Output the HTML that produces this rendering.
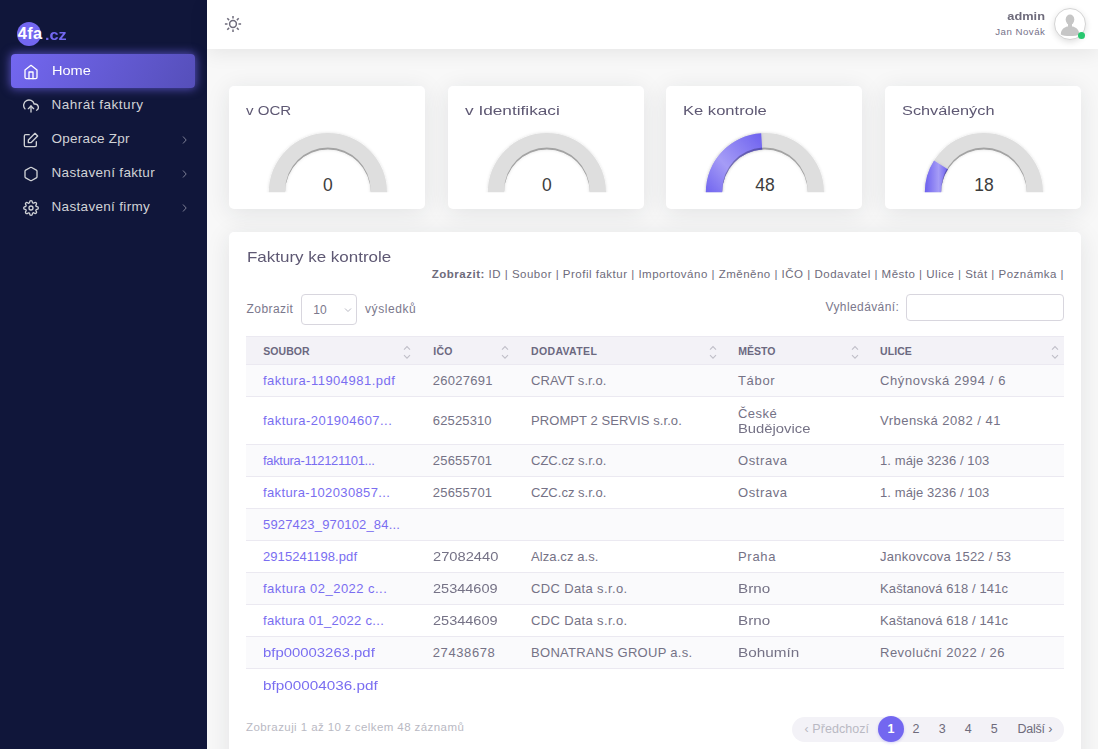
<!DOCTYPE html>
<html><head><meta charset="utf-8"><style>
*{box-sizing:border-box;margin:0;padding:0}
html,body{width:1098px;height:749px;overflow:hidden}
body{font-family:"Liberation Sans",sans-serif;background:#f8f8f8;position:relative}
.abs{position:absolute}
.t{position:absolute;white-space:nowrap}
.card{background:#fff;border-radius:5px;box-shadow:0 4px 24px 0 rgba(34,41,47,.1)}
</style></head><body>
<div class="abs" style="left:0;top:0;width:207px;height:749px;background:#10163a"></div>
<div class="abs" style="left:16.9px;top:21.8px;width:24.5px;height:24.5px;border-radius:50%;background:#7367f0"></div>
<div class="t" id="logo4fa" style="left:17.7px;top:23.48px;font-size:16.5px;line-height:21px;color:#fff;font-weight:bold;letter-spacing:0.371px;">4fa</div>
<div class="t" id="logocz" style="left:44.5px;top:25.67px;font-size:14.5px;line-height:18px;color:#7367f0;font-weight:bold;letter-spacing:0.000px;transform:scaleX(1.1166);transform-origin:left center;">.cz</div>
<div class="abs" style="left:11px;top:54px;width:184px;height:34px;border-radius:4px;background:linear-gradient(118deg,#7367f0,rgba(115,103,240,.7));box-shadow:0 0 10px 1px rgba(115,103,240,.7)"></div>
<svg class="abs" style="left:23px;top:64px" width="16" height="16" viewBox="0 0 24 24" fill="none" stroke-width="2" stroke-linecap="round" stroke-linejoin="round" stroke="#fff"><path d="M3 9l9-7 9 7v11a2 2 0 0 1-2 2H5a2 2 0 0 1-2-2z"/><polyline points="9 22 9 12 15 12 15 22"/></svg>
<svg class="abs" style="left:23px;top:98px" width="16" height="16" viewBox="0 0 24 24" fill="none" stroke-width="2" stroke-linecap="round" stroke-linejoin="round" stroke="#d0d2d6"><polyline points="16 16 12 12 8 16"/><line x1="12" y1="12" x2="12" y2="21"/><path d="M20.39 18.39A5 5 0 0 0 18 9h-1.26A8 8 0 1 0 3 16.3"/></svg>
<svg class="abs" style="left:23px;top:132px" width="16" height="16" viewBox="0 0 24 24" fill="none" stroke-width="2" stroke-linecap="round" stroke-linejoin="round" stroke="#d0d2d6"><path d="M20 14.66V20a2 2 0 0 1-2 2H4a2 2 0 0 1-2-2V6a2 2 0 0 1 2-2h5.34"/><polygon points="18 2 22 6 12 16 8 16 8 12 18 2"/></svg>
<svg class="abs" style="left:23px;top:166px" width="16" height="16" viewBox="0 0 24 24" fill="none" stroke-width="2" stroke-linecap="round" stroke-linejoin="round" stroke="#d0d2d6"><path d="M21 16V8a2 2 0 0 0-1-1.73l-7-4a2 2 0 0 0-2 0l-7 4A2 2 0 0 0 3 8v8a2 2 0 0 0 1 1.73l7 4a2 2 0 0 0 2 0l7-4A2 2 0 0 0 21 16z"/></svg>
<svg class="abs" style="left:23px;top:200px" width="16" height="16" viewBox="0 0 24 24" fill="none" stroke-width="2" stroke-linecap="round" stroke-linejoin="round" stroke="#d0d2d6"><circle cx="12" cy="12" r="3"/><path d="M19.4 15a1.65 1.65 0 0 0 .33 1.82l.06.06a2 2 0 0 1 0 2.83 2 2 0 0 1-2.83 0l-.06-.06a1.65 1.65 0 0 0-1.82-.33 1.65 1.65 0 0 0-1 1.51V21a2 2 0 0 1-2 2 2 2 0 0 1-2-2v-.09A1.65 1.65 0 0 0 9 19.4a1.65 1.65 0 0 0-1.82.33l-.06.06a2 2 0 0 1-2.83 0 2 2 0 0 1 0-2.830l.06-.06a1.65 1.65 0 0 0 .33-1.82 1.65 1.65 0 0 0-1.51-1H3a2 2 0 0 1-2-2 2 2 0 0 1 2-2h.09A1.65 1.65 0 0 0 4.6 9a1.65 1.65 0 0 0-.33-1.82l-.06-.06a2 2 0 0 1 0-2.83 2 2 0 0 1 2.83 0l.06.06a1.65 1.65 0 0 0 1.82.33H9a1.65 1.65 0 0 0 1-1.51V3a2 2 0 0 1 2-2 2 2 0 0 1 2 2v.09a1.65 1.65 0 0 0 1 1.51 1.65 1.65 0 0 0 1.82-.33l.06-.06a2 2 0 0 1 2.83 0 2 2 0 0 1 0 2.83l-.06.06a1.65 1.65 0 0 0-.33 1.82V9a1.65 1.65 0 0 0 1.51 1H21a2 2 0 0 1 2 2 2 2 0 0 1-2 2h-.09a1.65 1.65 0 0 0-1.51 1z"/></svg>
<div class="t" id="nHome" style="left:51.7px;top:61.92px;font-size:13.5px;line-height:17px;color:#fff;font-weight:normal;letter-spacing:0.000px;transform:scaleX(1.0773);transform-origin:left center;">Home</div>
<div class="t" id="nNahrat" style="left:51.5px;top:96.42px;font-size:13.5px;line-height:17px;color:#d0d2d6;font-weight:normal;letter-spacing:0.508px;">Nahrát faktury</div>
<div class="t" id="nOper" style="left:51.5px;top:130.32px;font-size:13.5px;line-height:17px;color:#d0d2d6;font-weight:normal;letter-spacing:0.221px;">Operace Zpr</div>
<div class="t" id="nNastF" style="left:51.5px;top:164.12px;font-size:13.5px;line-height:17px;color:#d0d2d6;font-weight:normal;letter-spacing:0.327px;">Nastavení faktur</div>
<div class="t" id="nNastFi" style="left:51.5px;top:197.92px;font-size:13.5px;line-height:17px;color:#d0d2d6;font-weight:normal;letter-spacing:0.323px;">Nastavení firmy</div>
<svg class="abs" style="left:181px;top:135px" width="8" height="10" viewBox="0 0 8 10"><path d="M2 1.5l3.2 3.5-3.2 3.5" fill="none" stroke="#7d7f95" stroke-width="1"/></svg>
<svg class="abs" style="left:181px;top:169px" width="8" height="10" viewBox="0 0 8 10"><path d="M2 1.5l3.2 3.5-3.2 3.5" fill="none" stroke="#7d7f95" stroke-width="1"/></svg>
<svg class="abs" style="left:181px;top:203px" width="8" height="10" viewBox="0 0 8 10"><path d="M2 1.5l3.2 3.5-3.2 3.5" fill="none" stroke="#7d7f95" stroke-width="1"/></svg>
<div class="abs" style="left:207px;top:0;width:891px;height:49px;background:#fff;box-shadow:0 4px 20px 0 rgba(0,0,0,.08)"></div>
<svg class="abs" style="left:222.7px;top:14.1px" width="20" height="20" viewBox="0 0 20 20" fill="none" stroke="#6e6b7b" stroke-width="1.5"><circle cx="10" cy="10" r="3.4"/><line x1="15.50" y1="10.00" x2="18.10" y2="10.00"/><line x1="13.89" y1="13.89" x2="15.73" y2="15.73"/><line x1="10.00" y1="15.50" x2="10.00" y2="18.10"/><line x1="6.11" y1="13.89" x2="4.27" y2="15.73"/><line x1="4.50" y1="10.00" x2="1.90" y2="10.00"/><line x1="6.11" y1="6.11" x2="4.27" y2="4.27"/><line x1="10.00" y1="4.50" x2="10.00" y2="1.90"/><line x1="13.89" y1="6.11" x2="15.73" y2="4.27"/></svg>
<div class="t" id="hAdmin" style="right:53.200000000000045px;top:8.52px;font-size:11.2px;line-height:14px;color:#6e6b7b;font-weight:bold;letter-spacing:0.000px;transform:scaleX(1.1410);transform-origin:right center;">admin</div>
<div class="t" id="hJan" style="right:53.09999999999991px;top:26.04px;font-size:9.7px;line-height:12px;color:#75728a;font-weight:normal;letter-spacing:0.490px;margin-right:-0.490px;">Jan Novák</div>
<div class="abs" style="left:1054px;top:8px;width:32px;height:32px;border-radius:50%;background:#fff;border:1.5px solid #d4d4d4;box-shadow:0 2px 6px rgba(0,0,0,.13);overflow:hidden"><svg style="position:absolute;left:-0.5px;top:-0.5px" width="30" height="30" viewBox="0 0 30 30"><ellipse cx="15" cy="10.6" rx="4.3" ry="5" fill="#c6c6c6"/><rect x="13" y="14" width="4" height="4" fill="#c6c6c6"/><path d="M5.8 25.5C5.8 20.5 9 18.2 12.5 17.4L17.5 17.4C21 18.2 24.2 20.5 24.2 25.5C21 27.5 9 27.5 5.8 25.5z" fill="#c6c6c6"/></svg></div>
<div class="abs" style="left:1077.9px;top:32px;width:7px;height:7px;border-radius:50%;background:#28c76f"></div>
<svg width="0" height="0" style="position:absolute"><defs>
<filter id="gsh" x="-10%" y="-10%" width="120%" height="120%"><feOffset in="SourceAlpha" dy="-1.6" result="off"/><feGaussianBlur in="off" stdDeviation="0.7" result="blur"/><feComposite in="SourceAlpha" in2="blur" operator="arithmetic" k2="1" k3="-1" result="edge"/><feFlood flood-color="#000" flood-opacity="0.5"/><feComposite in2="edge" operator="in" result="sh"/><feGaussianBlur in="SourceAlpha" stdDeviation="1.8" result="glow0"/><feFlood flood-color="#000" flood-opacity="0.13"/><feComposite in2="glow0" operator="in" result="glow"/><feMerge result="m"><feMergeNode in="glow"/><feMergeNode in="SourceGraphic"/><feMergeNode in="sh"/></feMerge><feGaussianBlur in="m" stdDeviation="0.45"/></filter>
<clipPath id="gclip"><rect x="0" y="0" width="196" height="106.2"/></clipPath>
<linearGradient id="gg3" x1="0" y1="1" x2="1" y2="0"><stop offset="0" stop-color="#6c60ef"/><stop offset="0.42" stop-color="#a59cf6"/><stop offset="1" stop-color="#6c60ef"/></linearGradient>
<linearGradient id="gg4" x1="0" y1="0" x2="1" y2="0"><stop offset="0" stop-color="#6c60ef"/><stop offset="0.6" stop-color="#a59cf6"/><stop offset="1" stop-color="#6c60ef"/></linearGradient>
</defs></svg>
<div class="abs card" style="left:229px;top:86px;width:196px;height:123px"></div>
<svg class="abs" style="left:229px;top:86px" width="196" height="123" viewBox="0 0 196 123"><g clip-path="url(#gclip)"><path d="M39.80,110.2 L56.20,110.2 L56.20,106.2 A42.7,42.7 0 0 1 141.60,106.2 L141.60,110.2 L158.00,110.2 L158.00,106.2 A59.1,59.1 0 0 0 39.80,106.2 Z" fill="#dedede" filter="url(#gsh)"/></g><text x="98.9" y="104.8" text-anchor="middle" font-family="Liberation Sans" font-size="17.5" fill="#3d3d3d">0</text></svg>
<div class="t" id="card0" style="left:246.3px;top:102.25px;font-size:13.7px;line-height:17px;color:#5e5873;font-weight:normal;letter-spacing:0.000px;transform:scaleX(1.1008);transform-origin:left center;">v OCR</div>
<div class="abs card" style="left:448px;top:86px;width:196px;height:123px"></div>
<svg class="abs" style="left:448px;top:86px" width="196" height="123" viewBox="0 0 196 123"><g clip-path="url(#gclip)"><path d="M39.80,110.2 L56.20,110.2 L56.20,106.2 A42.7,42.7 0 0 1 141.60,106.2 L141.60,110.2 L158.00,110.2 L158.00,106.2 A59.1,59.1 0 0 0 39.80,106.2 Z" fill="#dedede" filter="url(#gsh)"/></g><text x="98.9" y="104.8" text-anchor="middle" font-family="Liberation Sans" font-size="17.5" fill="#3d3d3d">0</text></svg>
<div class="t" id="card1" style="left:465.3px;top:102.25px;font-size:13.7px;line-height:17px;color:#5e5873;font-weight:normal;letter-spacing:0.000px;transform:scaleX(1.2585);transform-origin:left center;">v Identifikaci</div>
<div class="abs card" style="left:666px;top:86px;width:196px;height:123px"></div>
<svg class="abs" style="left:666px;top:86px" width="196" height="123" viewBox="0 0 196 123"><g clip-path="url(#gclip)"><path d="M39.80,110.2 L56.20,110.2 L56.20,106.2 A42.7,42.7 0 0 1 141.60,106.2 L141.60,110.2 L158.00,110.2 L158.00,106.2 A59.1,59.1 0 0 0 39.80,106.2 Z" fill="#dedede" filter="url(#gsh)"/><path d="M39.80,110.2 L56.20,110.2 L56.20,106.2 A42.7,42.7 0 0 1 96.22,63.58 L95.19,47.22 A59.1,59.1 0 0 0 39.80,106.2 Z" fill="url(#gg3)" filter="url(#gsh)"/></g><text x="98.9" y="104.8" text-anchor="middle" font-family="Liberation Sans" font-size="17.5" fill="#3d3d3d">48</text></svg>
<div class="t" id="card2" style="left:683.3px;top:102.25px;font-size:13.7px;line-height:17px;color:#5e5873;font-weight:normal;letter-spacing:0.000px;transform:scaleX(1.2101);transform-origin:left center;">Ke kontrole</div>
<div class="abs card" style="left:885px;top:86px;width:196px;height:123px"></div>
<svg class="abs" style="left:885px;top:86px" width="196" height="123" viewBox="0 0 196 123"><g clip-path="url(#gclip)"><path d="M39.80,110.2 L56.20,110.2 L56.20,106.2 A42.7,42.7 0 0 1 141.60,106.2 L141.60,110.2 L158.00,110.2 L158.00,106.2 A59.1,59.1 0 0 0 39.80,106.2 Z" fill="#dedede" filter="url(#gsh)"/><path d="M39.80,110.2 L56.20,110.2 L56.20,106.2 A42.7,42.7 0 0 1 62.85,83.32 L49.00,74.53 A59.1,59.1 0 0 0 39.80,106.2 Z" fill="url(#gg4)" filter="url(#gsh)"/></g><text x="98.9" y="104.8" text-anchor="middle" font-family="Liberation Sans" font-size="17.5" fill="#3d3d3d">18</text></svg>
<div class="t" id="card3" style="left:902.3px;top:102.25px;font-size:13.7px;line-height:17px;color:#5e5873;font-weight:normal;letter-spacing:0.000px;transform:scaleX(1.1919);transform-origin:left center;">Schválených</div>
<div class="abs card" style="left:229px;top:232px;width:852px;height:560px"></div>
<div class="t" id="tTitle" style="left:246.6px;top:247.10px;font-size:15px;line-height:19px;color:#5e5873;font-weight:normal;letter-spacing:0.000px;transform:scaleX(1.1304);transform-origin:left center;">Faktury ke kontrole</div>
<div class="t" id="tColv" style="left:431.8px;top:267.01px;font-size:11.5px;line-height:14px;color:#6e6b7b;font-weight:normal;letter-spacing:0.499px;"><b>Zobrazit:</b> ID | Soubor | Profil faktur | Importováno | Změněno | IČO | Dodavatel | Město | Ulice | Stát | Poznámka |</div>
<div class="t" id="tZobr" style="left:246.6px;top:301.84px;font-size:12px;line-height:15px;color:#7b788c;font-weight:normal;letter-spacing:0.406px;">Zobrazit</div>
<div class="abs" style="left:301.3px;top:294.2px;width:55.6px;height:30.4px;border:1px solid #d8d6de;border-radius:4px"></div>
<div class="t" id="tTen" style="left:313.3px;top:303.14px;font-size:12px;line-height:15px;color:#7b788c;font-weight:normal;letter-spacing:0.000px;">10</div>
<svg class="abs" style="left:343.8px;top:306.6px" width="8" height="6" viewBox="0 0 8 6"><path d="M1 1.5l3 3 3-3" fill="none" stroke="#b9b9c3" stroke-width="1"/></svg>
<div class="t" id="tVysl" style="left:365px;top:301.84px;font-size:12px;line-height:15px;color:#7b788c;font-weight:normal;letter-spacing:0.585px;">výsledků</div>
<div class="t" id="tVyhl" style="left:825.5px;top:299.84px;font-size:12px;line-height:15px;color:#7b788c;font-weight:normal;letter-spacing:0.397px;">Vyhledávání:</div>
<div class="abs" style="left:906px;top:294px;width:158px;height:27px;border:1px solid #d8d6de;border-radius:4px"></div>
<div class="abs" style="left:246px;top:336px;width:818px;height:29px;background:#f3f2f7;border-top:1px solid #ebe9f1;border-bottom:1px solid #ebe9f1"></div>
<div class="t" id="hS" style="left:263.2px;top:344.96px;font-size:10.5px;line-height:13px;color:#6b6880;font-weight:bold;letter-spacing:0.080px;">SOUBOR</div>
<div class="t" id="hI" style="left:433.2px;top:344.96px;font-size:10.5px;line-height:13px;color:#6b6880;font-weight:bold;letter-spacing:0.316px;">IČO</div>
<div class="t" id="hD" style="left:531px;top:344.96px;font-size:10.5px;line-height:13px;color:#6b6880;font-weight:bold;letter-spacing:0.350px;">DODAVATEL</div>
<div class="t" id="hM" style="left:738.3px;top:344.96px;font-size:10.5px;line-height:13px;color:#6b6880;font-weight:bold;letter-spacing:0.011px;">MĚSTO</div>
<div class="t" id="hU" style="left:880px;top:344.96px;font-size:10.5px;line-height:13px;color:#6b6880;font-weight:bold;letter-spacing:0.074px;">ULICE</div>
<svg class="abs" style="left:403px;top:342px" width="8" height="18" viewBox="0 0 8 18"><path d="M1 7.6l3-3 3 3M1 13.2l3 3 3-3" fill="none" stroke="#c0bfc8" stroke-width="1.1"/></svg>
<svg class="abs" style="left:501px;top:342px" width="8" height="18" viewBox="0 0 8 18"><path d="M1 7.6l3-3 3 3M1 13.2l3 3 3-3" fill="none" stroke="#c0bfc8" stroke-width="1.1"/></svg>
<svg class="abs" style="left:709px;top:342px" width="8" height="18" viewBox="0 0 8 18"><path d="M1 7.6l3-3 3 3M1 13.2l3 3 3-3" fill="none" stroke="#c0bfc8" stroke-width="1.1"/></svg>
<svg class="abs" style="left:851px;top:342px" width="8" height="18" viewBox="0 0 8 18"><path d="M1 7.6l3-3 3 3M1 13.2l3 3 3-3" fill="none" stroke="#c0bfc8" stroke-width="1.1"/></svg>
<svg class="abs" style="left:1051px;top:342px" width="8" height="18" viewBox="0 0 8 18"><path d="M1 7.6l3-3 3 3M1 13.2l3 3 3-3" fill="none" stroke="#c0bfc8" stroke-width="1.1"/></svg>
<div class="abs" style="left:246px;top:365.0px;width:818px;height:32.2px;background:#fafafc;border-bottom:1px solid #ebe9f1;"></div>
<div class="t" id="r0c0" style="left:263px;top:372.94px;font-size:13px;line-height:16px;color:#7a6ef1;font-weight:normal;letter-spacing:0.482px;">faktura-11904981.pdf</div>
<div class="t" id="r0c1" style="left:432.8px;top:372.94px;font-size:13px;line-height:16px;color:#757286;font-weight:normal;letter-spacing:0.279px;">26027691</div>
<div class="t" id="r0c2" style="left:531px;top:372.94px;font-size:13px;line-height:16px;color:#757286;font-weight:normal;letter-spacing:0.059px;">CRAVT s.r.o.</div>
<div class="t" id="r0c3" style="left:738px;top:372.94px;font-size:13px;line-height:16px;color:#757286;font-weight:normal;letter-spacing:0.659px;">Tábor</div>
<div class="t" id="r0c4" style="left:880px;top:372.94px;font-size:13px;line-height:16px;color:#757286;font-weight:normal;letter-spacing:0.623px;">Chýnovská 2994 / 6</div>
<div class="abs" style="left:246px;top:397.2px;width:818px;height:48.1px;background:#fff;border-bottom:1px solid #ebe9f1;"></div>
<div class="t" id="r1c0" style="left:263px;top:413.34px;font-size:13px;line-height:16px;color:#7a6ef1;font-weight:normal;letter-spacing:0.464px;">faktura-201904607...</div>
<div class="t" id="r1c1" style="left:432.8px;top:413.34px;font-size:13px;line-height:16px;color:#757286;font-weight:normal;letter-spacing:0.137px;">62525310</div>
<div class="t" id="r1c2" style="left:531px;top:413.34px;font-size:13px;line-height:16px;color:#757286;font-weight:normal;letter-spacing:0.082px;">PROMPT 2 SERVIS s.r.o.</div>
<div class="t" id="r1c3a" style="left:738px;top:405.69px;font-size:13px;line-height:16px;color:#757286;font-weight:normal;letter-spacing:0.486px;">České</div>
<div class="t" id="r1c3b" style="left:738px;top:420.99px;font-size:13px;line-height:16px;color:#757286;font-weight:normal;letter-spacing:0.000px;transform:scaleX(1.1382);transform-origin:left center;">Budějovice</div>
<div class="t" id="r1c4" style="left:880px;top:413.34px;font-size:13px;line-height:16px;color:#757286;font-weight:normal;letter-spacing:0.478px;">Vrbenská 2082 / 41</div>
<div class="abs" style="left:246px;top:445.3px;width:818px;height:31.9px;background:#fafafc;border-bottom:1px solid #ebe9f1;"></div>
<div class="t" id="r2c0" style="left:263px;top:453.34px;font-size:13px;line-height:16px;color:#7a6ef1;font-weight:normal;letter-spacing:-0.329px;">faktura-112121101...</div>
<div class="t" id="r2c1" style="left:432.8px;top:453.34px;font-size:13px;line-height:16px;color:#757286;font-weight:normal;letter-spacing:0.208px;">25655701</div>
<div class="t" id="r2c2" style="left:531px;top:453.34px;font-size:13px;line-height:16px;color:#757286;font-weight:normal;letter-spacing:0.014px;">CZC.cz s.r.o.</div>
<div class="t" id="r2c3" style="left:738px;top:453.34px;font-size:13px;line-height:16px;color:#757286;font-weight:normal;letter-spacing:0.597px;">Ostrava</div>
<div class="t" id="r2c4" style="left:880px;top:453.34px;font-size:13px;line-height:16px;color:#757286;font-weight:normal;letter-spacing:0.088px;">1. máje 3236 / 103</div>
<div class="abs" style="left:246px;top:477.2px;width:818px;height:31.8px;background:#fff;border-bottom:1px solid #ebe9f1;"></div>
<div class="t" id="r3c0" style="left:263px;top:485.19px;font-size:13px;line-height:16px;color:#7a6ef1;font-weight:normal;letter-spacing:0.359px;">faktura-102030857...</div>
<div class="t" id="r3c1" style="left:432.8px;top:485.19px;font-size:13px;line-height:16px;color:#757286;font-weight:normal;letter-spacing:0.208px;">25655701</div>
<div class="t" id="r3c2" style="left:531px;top:485.19px;font-size:13px;line-height:16px;color:#757286;font-weight:normal;letter-spacing:0.014px;">CZC.cz s.r.o.</div>
<div class="t" id="r3c3" style="left:738px;top:485.19px;font-size:13px;line-height:16px;color:#757286;font-weight:normal;letter-spacing:0.597px;">Ostrava</div>
<div class="t" id="r3c4" style="left:880px;top:485.19px;font-size:13px;line-height:16px;color:#757286;font-weight:normal;letter-spacing:0.088px;">1. máje 3236 / 103</div>
<div class="abs" style="left:246px;top:509.0px;width:818px;height:32.1px;background:#fafafc;border-bottom:1px solid #ebe9f1;"></div>
<div class="t" id="r4c0" style="left:263px;top:517.14px;font-size:13px;line-height:16px;color:#7a6ef1;font-weight:normal;letter-spacing:0.161px;">5927423_970102_84...</div>
<div class="abs" style="left:246px;top:541.1px;width:818px;height:31.9px;background:#fff;border-bottom:1px solid #ebe9f1;"></div>
<div class="t" id="r5c0" style="left:263px;top:549.14px;font-size:13px;line-height:16px;color:#7a6ef1;font-weight:normal;letter-spacing:0.075px;">2915241198.pdf</div>
<div class="t" id="r5c1" style="left:432.8px;top:549.14px;font-size:13px;line-height:16px;color:#757286;font-weight:normal;letter-spacing:0.000px;transform:scaleX(1.1306);transform-origin:left center;">27082440</div>
<div class="t" id="r5c2" style="left:531px;top:549.14px;font-size:13px;line-height:16px;color:#757286;font-weight:normal;letter-spacing:0.084px;">Alza.cz a.s.</div>
<div class="t" id="r5c3" style="left:738px;top:549.14px;font-size:13px;line-height:16px;color:#757286;font-weight:normal;letter-spacing:0.702px;">Praha</div>
<div class="t" id="r5c4" style="left:880px;top:549.14px;font-size:13px;line-height:16px;color:#757286;font-weight:normal;letter-spacing:0.243px;">Jankovcova 1522 / 53</div>
<div class="abs" style="left:246px;top:573.0px;width:818px;height:32.1px;background:#fafafc;border-bottom:1px solid #ebe9f1;"></div>
<div class="t" id="r6c0" style="left:263px;top:581.14px;font-size:13px;line-height:16px;color:#7a6ef1;font-weight:normal;letter-spacing:0.467px;">faktura 02_2022 c...</div>
<div class="t" id="r6c1" style="left:432.8px;top:581.14px;font-size:13px;line-height:16px;color:#757286;font-weight:normal;letter-spacing:0.000px;transform:scaleX(1.1168);transform-origin:left center;">25344609</div>
<div class="t" id="r6c2" style="left:531px;top:581.14px;font-size:13px;line-height:16px;color:#757286;font-weight:normal;letter-spacing:0.362px;">CDC Data s.r.o.</div>
<div class="t" id="r6c3" style="left:738px;top:581.14px;font-size:13px;line-height:16px;color:#757286;font-weight:normal;letter-spacing:0.000px;transform:scaleX(1.1686);transform-origin:left center;">Brno</div>
<div class="t" id="r6c4" style="left:880px;top:581.14px;font-size:13px;line-height:16px;color:#757286;font-weight:normal;letter-spacing:0.118px;">Kaštanová 618 / 141c</div>
<div class="abs" style="left:246px;top:605.1px;width:818px;height:31.9px;background:#fff;border-bottom:1px solid #ebe9f1;"></div>
<div class="t" id="r7c0" style="left:263px;top:613.14px;font-size:13px;line-height:16px;color:#7a6ef1;font-weight:normal;letter-spacing:0.309px;">faktura 01_2022 c...</div>
<div class="t" id="r7c1" style="left:432.8px;top:613.14px;font-size:13px;line-height:16px;color:#757286;font-weight:normal;letter-spacing:0.000px;transform:scaleX(1.1168);transform-origin:left center;">25344609</div>
<div class="t" id="r7c2" style="left:531px;top:613.14px;font-size:13px;line-height:16px;color:#757286;font-weight:normal;letter-spacing:0.362px;">CDC Data s.r.o.</div>
<div class="t" id="r7c3" style="left:738px;top:613.14px;font-size:13px;line-height:16px;color:#757286;font-weight:normal;letter-spacing:0.000px;transform:scaleX(1.1686);transform-origin:left center;">Brno</div>
<div class="t" id="r7c4" style="left:880px;top:613.14px;font-size:13px;line-height:16px;color:#757286;font-weight:normal;letter-spacing:0.118px;">Kaštanová 618 / 141c</div>
<div class="abs" style="left:246px;top:637.0px;width:818px;height:32.0px;background:#fafafc;border-bottom:1px solid #ebe9f1;"></div>
<div class="t" id="r8c0" style="left:263px;top:645.09px;font-size:13px;line-height:16px;color:#7a6ef1;font-weight:normal;letter-spacing:0.000px;transform:scaleX(1.1454);transform-origin:left center;">bfp00003263.pdf</div>
<div class="t" id="r8c1" style="left:432.8px;top:645.09px;font-size:13px;line-height:16px;color:#757286;font-weight:normal;letter-spacing:0.594px;">27438678</div>
<div class="t" id="r8c2" style="left:531px;top:645.09px;font-size:13px;line-height:16px;color:#757286;font-weight:normal;letter-spacing:0.297px;">BONATRANS GROUP a.s.</div>
<div class="t" id="r8c3" style="left:738px;top:645.09px;font-size:13px;line-height:16px;color:#757286;font-weight:normal;letter-spacing:0.000px;transform:scaleX(1.1759);transform-origin:left center;">Bohumín</div>
<div class="t" id="r8c4" style="left:880px;top:645.09px;font-size:13px;line-height:16px;color:#757286;font-weight:normal;letter-spacing:0.487px;">Revoluční 2022 / 26</div>
<div class="abs" style="left:246px;top:669.0px;width:818px;height:33.4px;background:#fff;"></div>
<div class="t" id="r9c0" style="left:263px;top:677.79px;font-size:13px;line-height:16px;color:#7a6ef1;font-weight:normal;letter-spacing:0.000px;transform:scaleX(1.1761);transform-origin:left center;">bfp00004036.pdf</div>
<div class="t" id="fInfo" style="left:246px;top:720.11px;font-size:11.5px;line-height:14px;color:#b9b9c3;font-weight:normal;letter-spacing:0.421px;">Zobrazuji 1 až 10 z celkem 48 záznamů</div>
<div class="abs" style="left:792px;top:717px;width:272px;height:24.5px;border-radius:13px;background:#f3f2f7"></div>
<div class="abs" style="left:878px;top:716.3px;width:26px;height:26px;border-radius:50%;background:#7367f0;box-shadow:0 1px 3px rgba(115,103,240,.3)"></div>
<div class="t" id="pPrev" style="left:804.6px;top:721.47px;font-size:12.5px;line-height:16px;color:#b9b9c3;font-weight:normal;letter-spacing:0.058px;">‹ Předchozí</div>
<div class="t" id="p1" style="left:891px;transform:translateX(-50%);top:721.47px;font-size:12.5px;line-height:16px;color:#fff;font-weight:bold;letter-spacing:0.000px;">1</div>
<div class="t" id="p2" style="left:916px;transform:translateX(-50%);top:721.47px;font-size:12.5px;line-height:16px;color:#6e6b7b;font-weight:normal;letter-spacing:0.000px;">2</div>
<div class="t" id="p3" style="left:942.2px;transform:translateX(-50%);top:721.47px;font-size:12.5px;line-height:16px;color:#6e6b7b;font-weight:normal;letter-spacing:0.000px;">3</div>
<div class="t" id="p4" style="left:968.2px;transform:translateX(-50%);top:721.47px;font-size:12.5px;line-height:16px;color:#6e6b7b;font-weight:normal;letter-spacing:0.000px;">4</div>
<div class="t" id="p5" style="left:994.3px;transform:translateX(-50%);top:721.47px;font-size:12.5px;line-height:16px;color:#6e6b7b;font-weight:normal;letter-spacing:0.000px;">5</div>
<div class="t" id="pNext" style="left:1017.5px;top:721.47px;font-size:12.5px;line-height:16px;color:#6e6b7b;font-weight:normal;letter-spacing:-0.221px;">Další ›</div>
</body></html>
